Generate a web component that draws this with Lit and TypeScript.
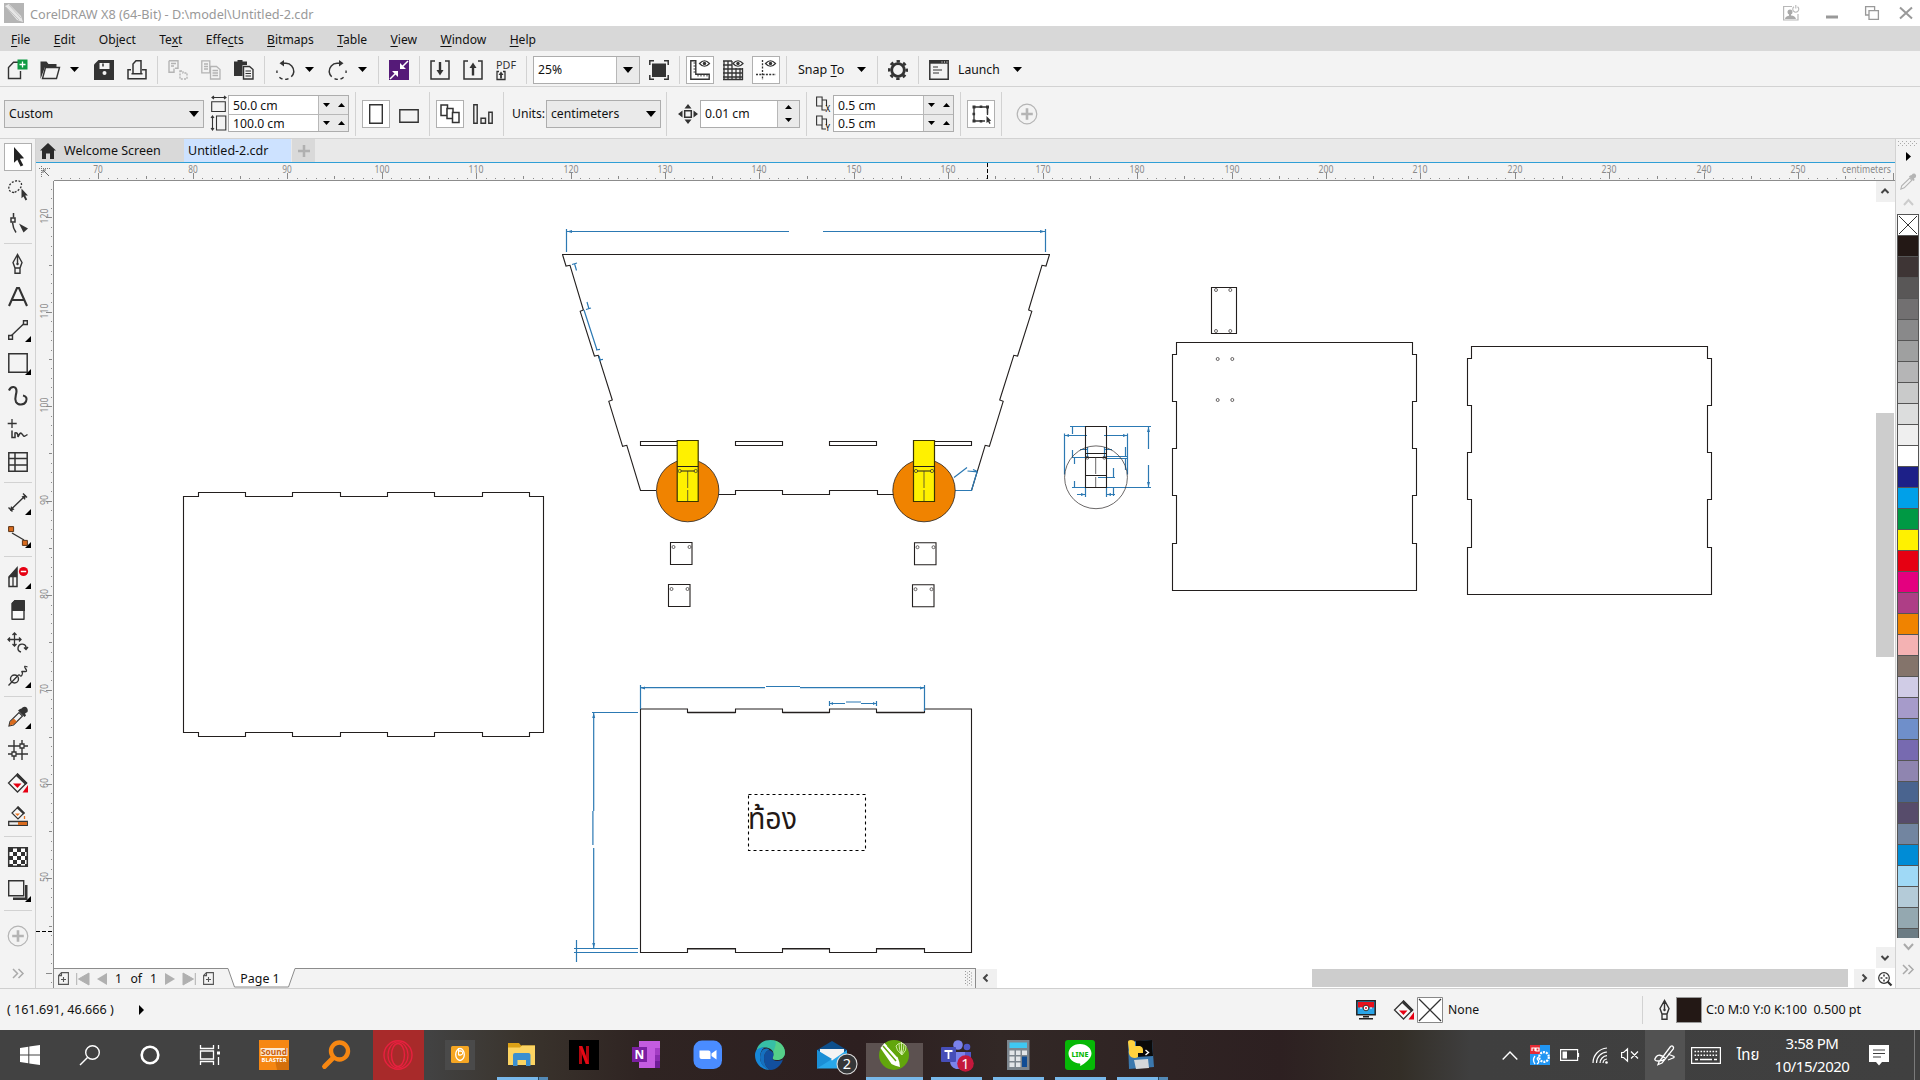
import { LitElement, html, svg, css, nothing, TemplateResult } from "lit";
import { customElement } from "lit/decorators.js";
import { classMap } from "lit/directives/class-map.js";

type Tpl = TemplateResult<1> | TemplateResult<2>;

const D = "#333";
const G = "#b4b4b4";

/* 20x20 line icons used by the toolbars and the toolbox */
const ICONS: Record<string, Tpl> = {
  newDoc: svg`<path d="M12.500 2.200H6.500L1.500 7.500V18.500H13.500V11" fill="none" stroke=${D} stroke-width="1.4"/><rect x="10.500" y="-.5" width="10" height="10" fill="#0f9a42"/><path d="M15.500 1.500v6M12.500 4.500h6" stroke="#fff" stroke-width="1.3"/>`,
  open: svg`<path d="M.5 19V1.500h6l2 2.500h8v3H5z" fill=${D}/><path d="M5.500 7.500h14l-3 11h-14z" fill="#f3f3f3" stroke=${D} stroke-width="1.400"/>`,
  save: svg`<path d="M4.500 0H20v20H0V4.500z" fill=${D}/><path d="M5.500 3h10v6h-10z" fill="#f3f3f3"/><path d="M9 3.500v3" stroke=${D} stroke-width="1.500"/><circle cx="10.500" cy="13" r="2" fill="#f3f3f3"/>`,
  print: svg`<path d="M6 13.500V4l3-3.200h5v12.700M4 9.800H1v9h18v-9h-4M4.500 13.700h11" fill="none" stroke=${D} stroke-width="1.500"/>`,
  cut: svg`<path d="M1 .8h9v7.500H7M1 .8v11.500h5V8.500M3 3.500h5M3 6h3" fill="none" stroke=${G} stroke-width="1.400"/><path d="M12 11h3l0 2h4v6h-7z" fill="none" stroke=${G} stroke-width="1.400" stroke-dasharray="2 1.200"/>`,
  copy: svg`<path d="M.8.8h8v12h-8zM3 4h4M3 6.500h4M3 9h4" fill="none" stroke=${G} stroke-width="1.300"/><path d="M9.500 6.500h6l3.500 3v9.500H9.500zM11.500 10.500h5.500M11.500 13h5.500M11.500 15.500h5.500" fill="#f3f3f3" stroke=${G} stroke-width="1.300"/>`,
  paste: svg`<path d="M0 1.500h3.500V0h5v1.500H13V5H8.500v11H0z" fill=${D}/><path d="M9.500 6.500h6l3.500 3v9.500H9.500z" fill="#f3f3f3" stroke=${D} stroke-width="1.400"/><path d="M11.500 11h5.500M11.500 13.500h5.500M11.500 16h5.500" stroke=${D} stroke-width="1.200"/>`,
  undo: svg`<path d="M6.500 3.300h4.500a8 8 0 0 1 7.800 8.500 8 8 0 0 1-2.500 5" fill="none" stroke=${D} stroke-width="1.500"/><path d="M9 0v6.500L4.500 3.300z" fill=${D}/><path d="M13.500 18.600a8 8 0 0 1-10-2.500M2 13a8 8 0 0 1 0-2.500" fill="none" stroke=${D} stroke-width="1.400" stroke-dasharray="3.500 2.500"/>`,
  redo: svg`<path d="M13.500 3.300H9a8 8 0 0 0-7.800 8.500 8 8 0 0 0 2.500 5" fill="none" stroke=${D} stroke-width="1.500"/><path d="M11 0v6.500l4.500-3.200z" fill=${D}/><path d="M6.500 18.600a8 8 0 0 0 10-2.500M18 13a8 8 0 0 0 0-2.500" fill="none" stroke=${D} stroke-width="1.400" stroke-dasharray="3.500 2.500"/>`,
  content: svg`<path d="M0 0h20v20H0z" fill="#551a78"/><path d="M19 1l-6 6M1 19l6-6" stroke="#fff" stroke-width="1.500"/><path d="M11 3v6h6zM9 17v-6H3z" fill="#fff"/>`,
  importI: svg`<path d="M5 1H1v18h18V1h-4" fill="none" stroke=${D} stroke-width="1.500"/><path d="M10 2v9" stroke=${D} stroke-width="2.400"/><path d="M6.500 10h7L10 15.500z" fill=${D}/>`,
  exportI: svg`<path d="M5 1H1v18h18V1h-4" fill="none" stroke=${D} stroke-width="1.500"/><path d="M10 15.500V7" stroke=${D} stroke-width="2.400"/><path d="M6.500 8h7L10 2.500z" fill=${D}/>`,
  pdf: svg`<text x="0" y="8.800" font-size="10.500" textLength="20" lengthAdjust="spacingAndGlyphs" fill=${D} font-family="Noto Sans, sans-serif">PDF</text><path d="M3 11.500H1v8h8v-8H7" fill="none" stroke=${D} stroke-width="1.300"/><path d="M5 18.500v-4" stroke=${D} stroke-width="1.800"/><path d="M2.500 15h5L5 11.500z" fill=${D}/>`,
  full: svg`<path d="M3 3.500h14v13.500H3z" fill=${D}/><path d="M.8 5V.8H5M15 .8h4.200V5M19.200 15v4.200H15M5 19.200H.8V15" fill="none" stroke=${D} stroke-width="1.500"/>`,
  rulers: svg`<path d="M.8.8h5v13.400h13.400v5H.8z" fill="none" stroke=${D} stroke-width="1.400"/><path d="M3.500 3h2M3.500 6h2M3.500 9h2M3.500 12h2M8 14.500v2M11 14.500v2M14 14.500v2M17 14.500v2" stroke=${D}/>${eye(14.500, 3.500)}`,
  grid: svg`<path d="M1 1v18M5 1v18M9 1v18M13 8v11M17 8v11M0 1h9M0 5h9M0 9h20M0 13h20M0 17h20M0 19.500h20M19.500 8v12" stroke=${D} stroke-width="1.300"/>${eye(15, 3.500)}`,
  guides: svg`<path d="M6.500 0v20M0 14.500h20" stroke=${D} stroke-width="1.300" stroke-dasharray="2 1.300"/>${eye(14.500, 3.500)}`,
  gear: svg`<circle cx="10" cy="10" r="6.300" fill="none" stroke=${D} stroke-width="2.800"/><circle cx="10" cy="10" r="8.700" fill="none" stroke=${D} stroke-width="2.600" stroke-dasharray="3.400 3.430" stroke-dashoffset="1.700"/>`,
  launch: svg`<path d="M.8.8h18.400v18.400H.8z" fill="none" stroke=${D} stroke-width="1.500"/><path d="M1 2.200h18" stroke=${D} stroke-width="3"/><path d="M12.500 2h1M15 2h1M17.500 2h1" stroke="#fff"/><path d="M4 7h5M4 10h9M4 13h6" stroke=${D} stroke-width="1.200"/>`,
  portrait: svg`<path d="M3.700.8h12.600v18.400H3.700z" fill="none" stroke=${D} stroke-width="1.400"/>`,
  landscape: svg`<path d="M.8 5.700h18.400v12.600H.8z" fill="none" stroke=${D} stroke-width="1.400"/>`,
  pages: svg`<path d="M1 1h6.500v10.500H1z" fill="#fff" stroke=${D} stroke-width="1.500"/><path d="M7 4.500h6v10H7z" fill="#fff" stroke=${D} stroke-width="1.500"/><path d="M12.500 8.500h6.500v10h-6.500z" fill="#fff" stroke=${D} stroke-width="1.500"/>`,
  pageCur: svg`<path d="M.8.8h3.400v18.400H.8zM8 14.200h4.500v5H8zM15.800 8.200h3.400v11h-3.400z" fill="none" stroke=${D} stroke-width="1.400"/>`,
  nudge: svg`<path d="M6.700 6.700h6.600v6.600H6.700z" fill="none" stroke=${D} stroke-width="1.500"/><path d="M10 0l3.500 4.500h-7zM10 20l3.500-4.500h-7zM0 10l4.500-3.500v7zM20 10l-4.500-3.500v7z" fill=${D}/>`,
  treat: svg`<path d="M3 3h13.500v14H3z" fill="none" stroke=${D} stroke-width="1.300"/><path d="M1.500 1.500h3v3h-3zM8.700 1.500h2.600v2.600H8.700zM15 1.500h3v3h-3zM1.500 8.700h2.600v2.600H1.500zM1.500 15.500h3v3h-3zM8.700 16h2.600v2.500H8.700z" fill=${D}/><path d="M14 9.500h7v11h-7z" fill="#fff"/><path d="M16.500 4v7" stroke=${D} stroke-width="1.300"/><path d="M15.500 12v7l1.600-1.300 1.300 2.300 1.200-.7-1.200-2.200 1.800-.3z" fill=${D}/>`,
  plusC: svg`<circle cx="10" cy="10" r="9.800" fill="none" stroke=${G} stroke-width="1.200"/><path d="M10 4.200v11.600M4.200 10h11.600" stroke=${G} stroke-width="2.600"/>`,
  pick: svg`<path d="M6 0v15.800l3.300-3 3.300 6.800 2.700-1.400-3.400-6.500 4.200-.4z" fill="#222"/>`,
  freePick: svg`<path d="M6 12.500C1 12.500-.5 8 2 4.500S10-.5 12.500 2s.5 8-6.500 10.500z" fill="none" stroke=${D} stroke-width="1.300" stroke-dasharray="2 1.500"/><path d="M13.500 8.500v9.700l2-1.800 2 4 1.700-.9-2-3.900 2.700-.2z" fill=${D}/>`,
  shape: svg`<path d="M5.500 0v4.500M4.500 9.500q.5 6 3.500 10" fill="none" stroke=${D} stroke-width="1.500"/><path d="M3 5h4v4H3z" fill="none" stroke=${D} stroke-width="1.500"/><path d="M11 10.500l9 5-4.500 4z" fill=${D}/>`,
  pen: svg`<path d="M9.500.5L5 8.500l2 5.500h5l2-5.500zM9.500 2v8M7 14v5.200h5V14" fill="none" stroke=${D} stroke-width="1.400"/><circle cx="9.500" cy="10" r="1.200" fill=${D}/>`,
  text: svg`<path d="M1 19L9 1h2l8 18M4 13h12" fill="none" stroke=${D} stroke-width="2.100"/>`,
  line: svg`<path d="M3.500 15.500L15.500 4" stroke=${D} stroke-width="1.400"/><path d="M.7 15.500h3.800v3.800H.7zM15.500 .7h3.800v3.800h-3.800z" fill="#f3f3f3" stroke=${D} stroke-width="1.400"/>`,
  rect: svg`<path d="M.8.8h18.400v18.400H.8z" fill="none" stroke=${D} stroke-width="1.500"/>`,
  spiral: svg`<path d="M1 4.500C3-.5 8.500 0 8.500 5c0 4-2.500 7-.5 11 2 3.500 8 3.500 10-.5 1.500-3 0-5.500-3-6" fill="none" stroke=${D} stroke-width="2.100"/>`,
  artistic: svg`<path d="M4 0v9M-.3 4.500h9" stroke=${D} stroke-width="1.300"/><path d="M4 11.500v7h3V14q3-1 3 4 2-5 3.500-3.500t2 2.500 4-1.500" fill="none" stroke=${D} stroke-width="1.500"/>`,
  table: svg`<path d="M.8.800h18.400v18.400H.8zM.8 6.500h18.400M.8 13h18.400M7 .8v18.400" fill="none" stroke=${D} stroke-width="1.500"/>`,
  dim: svg`<path d="M2.500 17L17 3M.5 14.500l4 4M15 .5l4 4" stroke=${D} stroke-width="1.400"/><path d="M2 18l1-5 3.500 3.500zM18 2l-1 5-3.500-3.500z" fill=${D}/>`,
  conn: svg`<path d="M4 7l12 7" stroke=${D} stroke-width="1.400"/><path d="M.6.6h5v5h-5zM14.400 14.400h5v5h-5z" fill="#d96b1e" stroke="#5a3418"/>`,
  knife: svg`<path d="M1 19.500V10l8-9v18.500z" fill="#f3f3f3" stroke=${D} stroke-width="1.500"/><path d="M1.500 10l7-7.500V9.500h-7zM5 9v10" fill=${D} stroke=${D} stroke-width="1.300"/><circle cx="15.500" cy="4.500" r="4.600" fill="#e60012"/><path d="M12.800 4.500h5.400" stroke="#fff" stroke-width="1.500"/>`,
  eraser: svg`<path d="M7 .7h9v18.600H4V3.500z" fill="#f8f8f8" stroke=${D} stroke-width="1.400" stroke-linejoin="round"/><path d="M6.500 0H16q1 0 1 1v10H4V3z" fill=${D}/>`,
  transform: svg`<path d="M6.500 0v13M0 6.500h13M4.500 2l2-2 2 2M4.500 11l2 2 2-2M2 4.500l-2 2 2 2M11 4.500l2 2-2 2" fill="none" stroke=${D} stroke-width="1.300"/><path d="M13 19a4 4 0 1 1 5-3.500M20 14l-2 2.500-2-2" fill="none" stroke=${D} stroke-width="1.400"/>`,
  distort: svg`<circle cx="6.500" cy="13" r="4" fill="none" stroke=${D} stroke-width="1.400"/><path d="M.5 19.500l9-9.500q1.500-2 2.500-.5t2-.5 0-3 2.500-.5 1-3 2-1.500" fill="none" stroke=${D} stroke-width="1.300"/>`,
  dropper: svg`<path d="M1 19l1-4.500L11 5.500l3.500 3.500-9 9z" fill="#f3f3f3" stroke=${D} stroke-width="1.200"/><path d="M1.500 18.500l.8-4 3.500-3 3 3-3.500 3z" fill="#d96b1e"/><path d="M10 3.500l6.500 6.500 1.500-1.500-1-2 2.500-1.500q1-3-1.500-5-3-.8-4.500 1.500L12 2z" fill=${D}/>`,
  dropperG: svg`<path d="M1 19l1-4L11.500 6l2.500 2.500-9 9z" fill="#f3f3f3" stroke="#b4b4b4" stroke-width="1.300"/><path d="M10.500 4l5.500 5.500 1.200-1.200-.8-1.800 2.300-1.500q1-2.500-1-4.200-2.500-.8-4 1.500L12 3z" fill="#b4b4b4"/>`,
  mesh: svg`<path d="M6 0v20M14 0v20M0 6h20M0 14h20" stroke=${D} stroke-width="1.400"/><path d="M12 4h4v4h-4zM4 12h4v4H4z" fill="#f3f3f3" stroke=${D} stroke-width="1.300"/>`,
  fill: svg`<path d="M9.500 1l9 9-9 9-9-9z" fill="#f8f8f8" stroke=${D} stroke-width="1.300"/><path d="M9.500 0l10 10-2 2L8 3z" fill=${D}/><path d="M5 10.500h8.500L9.500 15z" fill="#e60012"/><path d="M20 12v7.500h-5.500z" fill="#e60012"/>`,
  smart: svg`<path d="M10 1l6 6-6 6-6-6z" fill="#f8f8f8" stroke=${D} stroke-width="1.200"/><path d="M10 0l7 7-1.500 1.500L8.500 2z" fill=${D}/><path d="M7 7.500h5L9.500 10z" fill="#e87522"/><path d="M16.500 10v3" stroke="#e87522" stroke-width="1.300"/><path d="M.7 15.500h18.600v3.800H.7z" fill="#eee" stroke=${D} stroke-width="1.300"/><path d="M10 16h9v3h-9z" fill="#d96b1e"/>`,
  checker: svg`<path d="M.7.7h18.600v18.600H.7z" fill="#fff" stroke=${D} stroke-width="1.500"/><path d="M1 1h4v4H1zM9 1h4v4H9zM5 5h4v4H5zM13 5h4v4h-4zM1 9h4v4H1zM9 9h4v4H9zM5 13h4v4H5zM13 13h4v4h-4zM1 17h4v2H1zM9 17h4v2H9zM17 1h2v4h-2zM17 9h2v4h-2zM17 17h2v2h-2z" fill=${D}/>`,
  shadow: svg`<path d="M.7.700h15v15H.7z" fill="none" stroke=${D} stroke-width="1.400"/><path d="M17 5h2.500v15H5v-2.500h12z" fill=${D}/>`,
};

function eye(x: number, y: number) {
  return svg`<path d="M${x - 5} ${y}q5-5.500 10 0q-5 5.500-10 0z" fill="#fff" stroke=${D} stroke-width="1.200"/><circle cx=${x} cy=${y} r="1.700" fill=${D}/>`;
}

const icon = (n: string, s = 20) =>
  html`<svg class="ic" width=${s} height=${s} viewBox="0 0 20 20">${ICONS[n]}</svg>`;

const tri = (dir: "d" | "u" | "r", w = 10, h = 6, fill = "#000") => {
  const p = dir === "d" ? `M0 0H${w}L${w / 2} ${h}z` : dir === "u" ? `M0 ${h}H${w}L${w / 2} 0z` : `M0 0L${w} ${h / 2}L0 ${h}z`;
  return html`<svg class="ic" width=${w} height=${h}><path d=${p} fill=${fill}/></svg>`;
};

const PALETTE = ["none", "#231815", "#3e3535", "#595757", "#727071", "#89898a", "#9fa0a0", "#b5b5b6", "#c9caca", "#dcdddd", "#efefef", "#ffffff", "#1d2088", "#00a0e9", "#009944", "#fff100", "#e60012", "#e4007f", "#ae3e86", "#f08300", "#f4b2b3", "#84746b", "#d0cce6", "#a69bca", "#6f8fca", "#776ab0", "#8f85b0", "#4a648f", "#574c6b", "#7285a0", "#008cd6", "#9fd9f6", "#b4cbd8", "#94a8b0", "#6c7c84"];

const MENUS = ["_File", "_Edit", "Ob_ject", "Te_xt", "Effe_cts", "_Bitmaps", "_Table", "_View", "_Window", "_Help"];

const accel = (s: string) => {
  const i = s.indexOf("_");
  return html`${s.slice(0, i)}<u>${s[i + 1]}</u>${s.slice(i + 2)}`;
};

const base = css`
  * { box-sizing: border-box; }
  .ic { display: block; overflow: visible; flex: none; }
  u { text-decoration-thickness: 1px; text-underline-offset: 2px; }
`;

/* ---------- rulers ---------- */
const STEP = 94.44;
@customElement("h-ruler")
class HRuler extends LitElement {
  static styles = css`:host{display:block;height:18px;flex:1;background:#f3f3f3;border-bottom:1px solid #8c8c8c}svg{display:block;overflow:visible}text{font:10px "Noto Sans",sans-serif;fill:#8a8a8a}`;
  render() {
    const ticks: Tpl[] = [];
    for (let v = 66; v <= 260; v++) {
      const x = Math.round(98.3 + ((v - 70) * STEP) / 10 - 54);
      if (x < 2 || x > 1839) continue;
      const h = v % 10 === 0 ? 6 : v % 5 === 0 ? 3 : 1;
      ticks.push(svg`<rect x=${x} y=${16 - h} width="1" height=${h} fill="#8a8a8a"/>`);
      if (v % 10 === 0 && v < 260) ticks.push(svg`<text x=${x} y="10" text-anchor="middle" textLength=${v < 100 ? 9.500 : 15} lengthAdjust="spacingAndGlyphs">${v}</text>`);
    }
    return html`<svg width="1841" height="17">${ticks}<text x="1788" y="10" textLength="49" lengthAdjust="spacingAndGlyphs">centimeters</text><path d="M933.500 0v17" stroke="#000" stroke-dasharray="4 2"/><path d="M1839.500 11v6" stroke="#8a8a8a"/></svg>`;
  }
}

@customElement("v-ruler")
class VRuler extends LitElement {
  static styles = css`:host{display:block;width:18px;background:#f3f3f3;border-right:1px solid #8c8c8c}svg{display:block}text{font:10px "Noto Sans",sans-serif;fill:#8a8a8a}`;
  render() {
    const t: Tpl[] = [];
    for (let v = 39; v <= 123; v++) {
      const y = Math.round(217.3 + ((120 - v) * STEP) / 10 - 181);
      if (y < 2 || y > 805) continue;
      const w = v % 10 === 0 ? 6 : v % 5 === 0 ? 3 : 1;
      t.push(svg`<rect x=${16 - w} y=${y} width=${w} height="1" fill="#8a8a8a"/>`);
      if (v % 10 === 0 && v > 40) t.push(svg`<text transform="translate(11.500 ${y - 1}) rotate(-90)" text-anchor="middle" textLength=${v < 100 ? 10 : 15} lengthAdjust="spacingAndGlyphs">${v}</text>`);
    }
    return html`<svg width="17" height="807">${t}<path d="M0 750.500h17" stroke="#000" stroke-dasharray="4 2"/></svg>`;
  }
}

/* ---------- drawing ---------- */
@customElement("drawing-canvas")
class DrawingCanvas extends LitElement {
  static styles = css`
    :host { display: block; flex: 1; background: #fff; overflow: hidden; }
    svg { display: block; }
    .k { fill: none; stroke: #231f1e; stroke-width: 1.1; }
    .thin { fill: none; stroke: #3a3635; stroke-width: .75; }
    .b { fill: none; stroke: #2c79b3; stroke-width: 1.2; }
    .bold { stroke-width: 1.5; }
    .ba { fill: #2c79b3; }
    .thai { font: 31px "Noto Sans Thai", "Noto Sans", "Liberation Sans", sans-serif; fill: #231815; }
  `;
  private panel(dx: number, dy: number) {
    return svg`<path class="k" transform="translate(${dx} ${dy})" d="M1176.500 342.500H1412.500V354.500H1416.500V401.500H1412.500V448.500H1416.500V495.500H1412.500V543.500H1416.500V590.500H1172.500V543.500H1176.500V495.500H1172.500V448.500H1176.500V401.500H1172.500V354.500H1176.500z"/>`;
  }
  private wheel(cx: number) {
    return svg`<circle cx=${cx} cy="490.600" r="31.200" fill="#f08300" stroke="#231f1e" stroke-width=".8"/>
      <path d="M${cx - 10.500} 440.500h21v61h-21z" fill="#fff100" stroke="#3b3400" stroke-width="1.200"/>
      <path class="k" d="M${cx - 10.500} 466.500h21M${cx - 7} 471h14"/><path class="thin" d="M${cx} 471v17M${cx} 490v11"/>
      <circle class="thin" cx=${cx - 8} cy="471" r="1.600"/><circle class="thin" cx=${cx + 8} cy="471" r="1.600"/>`;
  }
  private block(x: number, y: number) {
    return svg`<path class="k" d="M${x} ${y}h21.500v22h-21.500z"/><circle class="thin" cx=${x + 3} cy=${y + 4.500} r="1.500"/><circle class="thin" cx=${x + 19} cy=${y + 4.500} r="1.500"/>`;
  }
  private dots(pts: number[][]) {
    return pts.map(([x, y]) => svg`<circle class="thin" cx=${x} cy=${y} r="1.500"/>`);
  }
  render() {
    const side = [[562.5, 254.5], [566, 266], [570, 265.3], [583.4, 310], [580.2, 311.3], [594.4, 356], [598.2, 355.3], [612.3, 400], [608.8, 401.3], [622.6, 446.3], [626.8, 445.3], [640.5, 490.5]];
    const L = side.map((p) => p.join(" ")).join("L");
    const R = side.map(([x, y]) => `${1612 - x} ${y}`).reverse().join("L");
    return html`<svg width="1822" height="787" viewBox="54 181 1822 787">
      <path class="k" d="M${L}H656M719 494.500H735.500V490.500H782.500V494.500H829.500V490.500H877.500V494.500H894"/>
      <path class="k" d="M${R}M562 254.500H1050"/>
      <path class="b" d="M955 490.500H971.500L977 472"/>
      <path class="k" d="M640.500 441.500h47v4h-47zM735.500 441.500h47v4h-47zM829.500 441.500h47v4h-47zM924.500 441.500h47v4h-47z"/>
      ${this.wheel(687.7)}${this.wheel(924)}
      ${this.block(670.5, 542.5)}${this.block(668.5, 584.5)}${this.block(914.5, 542.7)}${this.block(912.5, 584.7)}
      <path class="b" d="M566.500 229V252M1045.500 229V252M566 231.500H789M823 231.500H1046"/>
      <path class="ba" d="M567 231.500l5-1.500v3zM1045 231.500l-5-1.500v3z"/>
      <path class="b" d="M572 264.500l5-1.500M574.500 263.500l2 7M587 302l2 7M586 309.500l5-1.500M584 310l13 40M596 350l4-.7M599 356l1.500 5M599 360l4-.700"/>
      <path class="b" d="M954 477.500l13-10M967.500 471l10 .8M973 469.500l4.500 2"/>
      ${this.panel(0, 0)}${this.panel(295, 4)}
      <path class="k" d="M1211.500 287.500H1236.500V333.500H1211.500z"/>
      ${this.dots([[1216, 290], [1230.3, 290], [1216, 331], [1230.3, 331], [1217.7, 359], [1232.3, 359], [1217.7, 400], [1232.3, 400]])}
      <path class="b" d="M1070 426.500h15M1109 426.500h42M1148.500 427v22M1148.500 465v22M1106 487.500h45M1064.500 433.500v41M1064 435.500h23M1104 435.500h23M1127.500 433.500v41M1072.500 427v7M1072.500 450v7M1072 457.500h13M1074.500 458v6M1074.500 481v6M1072 487.500h13M1087.500 447v10M1104.500 447v10M1080 449.500h7M1104 449.500h8M1085.500 487v10M1106.500 487v10M1077 494.500h9M1106 494.500h9M1113.500 468v10M1098 477.500h17M1113.500 487v9M1106 456.500h22M1106 458.500h22M1125.500 447v9M1125.500 459v11"/>
      <path class="ba" d="M1148.500 427l-1.500 5h3zM1148.500 487l-1.500-5h3zM1065 435.500l4-1.500v3zM1127 435.500l-4-1.500v3zM1085 494.500l-4-1.500v3zM1107 494.500l4-1.500v3z"/>
      <circle class="thin" cx="1096" cy="477.300" r="31.400"/>
      <path class="k" d="M1085.500 426.500H1106.500V487.500H1085.500zM1085.500 453.500h21M1085.500 457.500h21M1085.500 475.500h21"/><path class="thin" d="M1095.700 457V474M1095.700 477v10"/>
      ${this.dots([[1087.3, 457.7], [1104.3, 457.7]])}
      <path class="k" d="M183.500 496.500H198.500V492.500H245.500V496.500H292.500V492.500H340.500V496.500H387.500V492.500H434.500V496.500H482.500V492.500H529.500V496.500H543.500V732.500H529.500V736.500H482.500V732.500H434.500V736.500H387.500V732.500H340.500V736.500H292.500V732.500H245.500V736.500H198.500V732.500H183.500z"/>
      <path class="k" d="M245 496.500h48M340 496.500h48M434 496.500h48M245 732.500h48M340 732.500h48M434 732.500h48"/>
      <path class="k" d="M640.500 709H687.500V712.500H735.500V709H782.500V712.500H829.500V709H876.500V712.500H924.500V709H971.500V952.500H924.500V948.500H876.500V952.500H829.500V948.500H782.500V952.500H735.500V948.500H687.500V952.500H640.500z"/>
      <path class="k bold" d="M687.500 712.500h48M782.500 712.500h47M876.500 712.500h48M687.500 948.700h48M782.500 948.700h47M876.500 948.700h48"/>
      <path class="b" d="M640.500 685V709M924.500 685V711M641 687.700H765M766 686.500H800M800 687.700H924M829.500 701V706M876.500 701V706M830 703.500H845M846 702H861M861 703.500H876M592 712.500H638M593.700 713V811M592.900 811V845M593.700 848V949M574 948.500H638M574 952.500H638M576.500 940V962"/>
      <path class="ba" d="M641 688l4-1.500v3zM924 688l-4-1.500v3zM593.700 713l-1.500 5h3zM593.700 948l-1.500-5h3zM830 703.500l3-1.500v3zM876 703.500l-3-1.500v3z"/>
      <path d="M748.500 794.500H865.500V850.500H748.500z" fill="none" stroke="#000" stroke-width="1.100" stroke-dasharray="3 3"/>
      <text class="thai" x="748" y="828.500" textLength="49" lengthAdjust="spacingAndGlyphs">ท้อง</text>
    </svg>`;
  }
}

/* ---------- taskbar ---------- */
const TASKS: { id: string; run?: boolean; stack?: boolean; art: Tpl }[] = [
  { id: "sound", art: svg`<path d="M0 0h30v30H0z" fill="#f68712"/><path d="M1.500 8h27v8h-27z" fill="#fbe8d2"/><path d="M16 20l10-4 4 5v9H18z" fill="#d5700b"/><text x="15" y="15" font-family="Noto Sans" font-weight="700" font-size="8.500" fill="#c9600a" text-anchor="middle" textLength="26" lengthAdjust="spacingAndGlyphs">Sound</text><text x="15" y="21.500" font-family="Noto Sans" font-weight="700" font-size="5" fill="#fff" text-anchor="middle" textLength="25" lengthAdjust="spacingAndGlyphs">BLASTER</text>` },
  { id: "find", art: svg`<circle cx="18.500" cy="11" r="8.500" fill="none" stroke="#f68712" stroke-width="4.400"/><path d="M12 18l-8.500 8.500" stroke="#f68712" stroke-width="4.800" stroke-linecap="round"/>` },
  { id: "opera", art: svg`<ellipse cx="15" cy="15" rx="14" ry="14.300" fill="none" stroke="#e8203f" stroke-width="1.400"/><ellipse cx="15" cy="15" rx="10" ry="13" fill="none" stroke="#e8203f" stroke-width="1.200"/><ellipse cx="15" cy="15" rx="6.500" ry="11.500" fill="none" stroke="#e8203f" stroke-width="1.400"/>` },
  { id: "app", art: svg`<path d="M0 0h30v30H0z" fill="#4a4a4a"/><rect x="6" y="6" width="18" height="17" rx="1.500" fill="#f5a623"/><ellipse cx="15" cy="14.500" rx="4.300" ry="6" fill="none" stroke="#fff" stroke-width="1.300"/><path d="M13.500 11h2.300q2 .2 2 2t-2 2h-2.300zh2.500q1.700.5 1.700 2t-2 2h-2.200v-7" fill="none" stroke="#fff"/>` },
  { id: "folder", run: true, stack: true, art: svg`<path d="M1 3h11l2 2.500h14v4H1z" fill="#dba117"/><path d="M1 7.500h12l2-2H28V25H1z" fill="#fcd462"/><path d="M6 26V15q0-2 2-2h13.500q2 0 2 2v11H19v-6h-8.500v6z" fill="#3b8fd0"/>` },
  { id: "netflix", art: svg`<path d="M0 0h30v30H0z" fill="#000"/><path d="M10 6h3v18h-3zM17 6h3v18h-3z" fill="#b1060f"/><path d="M10 6h3.300l6.700 18h-3.300z" fill="#e50914"/>` },
  { id: "onenote", art: svg`<path d="M8 1h21v27H8z" fill="#c45ce0"/><path d="M24 8h5v7h-5z" fill="#a33cc4"/><path d="M24 15h5v6h-5z" fill="#8a2bb0"/><path d="M24 21h5v7h-5z" fill="#6f1d98"/><path d="M1 7h15v15H1z" fill="#7b1fa2"/><text x="8.500" y="19" font-family="Noto Sans" font-weight="700" font-size="12" fill="#fff" text-anchor="middle">N</text>` },
  { id: "zoom", art: svg`<rect x=".5" y=".5" width="28.500" height="28.500" rx="8.500" fill="#4a8cff"/><path d="M6.500 10.500h9q2 0 2 2v6.500h-9q-2 0-2-2zM18.500 13.500l5-3.500v9.500l-5-3.500z" fill="#fff"/>` },
  { id: "edge", art: svg`<path d="M1 13C2 4 8 0 15.500 0 24 0 30 6 30 12.500c0 5-4 7.500-8 7.500-3 0-4.500-1-4.500-2s1-1.500 1-4c0-4-4-6.500-8.500-6.500S2 10 1 13z" fill="#37bfa6"/><path d="M15.500 0C24 0 30 6 30 12.500c0 5-4 7.500-8 7.500-3 0-4.500-1-4.500-2s1-1.500 1-4c0-5 3-8 2-13z" fill="#62d67c" opacity=".7"/><path d="M0 15C0 9 5 7 9.500 7.500c-3 2-4.500 6-4.500 10C5 23 9 28 15 30 7 30 0 24 0 15z" fill="#1787d8"/><path d="M9 18c0-4 2-7 5-8 2.500.8 4.500 2.500 4.500 4.500 0 2.500-1 3-1 4 0 1.300 2 2.500 5 2.500 2.200 0 4.500-.8 5.500-1.700C26 26 21 30 15.500 30 11 28 9 23 9 18z" fill="#124f9e"/><path d="M5 17.500C5 12 8 8 12 8.500c1.500.3 2 .8 2 1.500-3 1-5 4-5 8 0 5 2 10 6.500 12C9 29 5 23 5 17.500z" fill="#1570c0"/>` },
  { id: "mail", art: svg`<path d="M0 10L15 1l15 9v18H0z" fill="#0d4f8c"/><path d="M3 9h24v12H3z" fill="#f4f4f4"/><path d="M0 10l15 10.500L30 10v18.500H0z" fill="#29a8ea"/><path d="M0 10v18.500L15 19z" fill="#1b8fd6"/><circle cx="30" cy="24" r="10" fill="#353638" stroke="#ddd" stroke-width="1.100"/><text x="30" y="29.200" font-family="Noto Sans" font-size="14.500" fill="#fff" text-anchor="middle">2</text>` },
  { id: "corel", run: true, art: svg`<circle cx="15" cy="15" r="15" fill="#62a60c"/><path d="M1.500 8l4-5 13 14q2 4 2.500 10-5-1-8.500-3z" fill="#fff"/><path d="M4 6l13 15M8.500 5.500l10 11" stroke="#62a60c" stroke-width="1.500"/><path d="M17 6q4.500-6 10 0 1 4-4 9-6-5-6-9zM22.500 2v13M20 4q0 6 2.500 11M25 4q0 6-2.500 11" fill="none" stroke="#d9efb2" stroke-width=".9"/>` },
  { id: "teams", run: true, art: svg`<circle cx="17" cy="5" r="4.800" fill="#7b83eb"/><circle cx="26" cy="7" r="3.300" fill="#5059c9"/><path d="M20 12h10v10q-4 4-8 2z" fill="#5059c9"/><path d="M9 12h15v10q-3 8-9 7-6-2-6-8z" fill="#7b83eb"/><rect x="0" y="7" width="15" height="15" rx="1" fill="#464eb8"/><path d="M3.500 11h8M7.500 11v8" stroke="#fff" stroke-width="1.800"/><circle cx="24.500" cy="23.500" r="8.300" fill="#c4183c"/><text x="24.500" y="29" font-family="Noto Sans" font-size="14.500" fill="#fff" text-anchor="middle">1</text>` },
  { id: "calc", run: true, art: svg`<path d="M4 0h22.500v30H4z" fill="#7c858d"/><path d="M6.500 2.500H24V8H6.500z" fill="#3fc8f2"/><path d="M6.500 10.500h5v4.500h-5zM13 10.500h4.500v4.500H13zM19 10.500h5v4.500h-5zM6.500 16.500h5V21h-5zM13 16.500h4.500V21H13zM6.500 22.500h5V27h-5zM13 22.500h4.500V27H13z" fill="#e2e5e8"/><path d="M19 16.500h5V27h-5z" fill="#0f4c94"/>` },
  { id: "line", run: true, art: svg`<rect width="30" height="30" rx="3" fill="#06b806"/><path d="M15 4c7 0 11.500 4.500 11.500 9.500C26.500 19 19 24 15.500 26c-.8-.5.300-2-.5-2.500C8 23 3.500 18.500 3.500 13.500S8 4 15 4z" fill="#fff"/><text x="15" y="16.800" font-family="Noto Sans" font-weight="800" font-size="7.500" fill="#06b806" text-anchor="middle" textLength="17" lengthAdjust="spacingAndGlyphs">LINE</text>` },
  { id: "shell", run: true, stack: true, art: svg`<path d="M1 2l24-2 2 27-25 2z" fill="#3b78ad"/><path d="M9 1l16-1 1 16-17 1z" fill="#0a0a0a"/><path d="M7 20l14-1 1 9-13 1z" fill="#d5d8da"/><path d="M1 2q0-2 3-2t4 2v4h5q3 1 3 4v3h-5v4q-3 2-7 0-3-3-2-7z" fill="#ffd23e"/><path d="M18.500 10l3 2.500-3 2.500" fill="none" stroke="#fff" stroke-width="1.400"/>` },
];

@customElement("win-taskbar")
class WinTaskbar extends LitElement {
  static styles = [base, css`
    :host { display: flex; height: 50px; color: #fff; align-items: stretch;
      background: linear-gradient(90deg, #424242 0, #424242 430px, #3a342d 520px, #2f2422 640px, #2d1f20 860px, #322826 1000px, #2d2021 1280px, #332e27 1400px, #3f3f3f 1470px, #404040 100%);
      font: 15px "Noto Sans", sans-serif; }
    .start { display: flex; width: 243px; }
    .sys { width: 60px; display: flex; align-items: center; justify-content: center; }
    .task { width: 62px; display: flex; justify-content: center; align-items: center; }
    .task.opera .cell { background: linear-gradient(#a82a2a 0 47px, #f00 47px); }
    .cell { width: 51px; height: 50px; display: flex; justify-content: center; align-items: center; border-bottom: 3px solid transparent; padding-top: 3px; }
    .run .cell { border-bottom-color: #78b8ea; }
    .stack .cell { border-image: linear-gradient(90deg, #78b8ea 0 40px, #27475f 40px 41px, #5389b5 41px) 1; border-width: 0 0 3px 0; border-style: solid; }
    .corel .cell { width: 57px; height: 50px; background: linear-gradient(transparent 13px, #5c5150 13px); }
    .gap { flex: 1; }
    .tray { display: flex; align-items: center; }
    .t { display: flex; justify-content: center; align-items: center; height: 50px; width: 30px; }
    .pen { width: 40px; background: #525252; }
    .kb { width: 41px; }
    .lang { width: 44px; font: 15px "Noto Sans Thai", "Noto Sans", sans-serif; }
    .clock { width: 84px; height: 50px; display: flex; flex-direction: column; align-items: center; justify-content: center; line-height: 23px; font-size: 15px; letter-spacing: -.5px; white-space: nowrap; }
    .note { width: 50px; }
    .desk { width: 6px; height: 50px; border-left: 1px solid #7a7a7a; margin-left: 10px; }
  `];
  render() {
    const w = "#fff";
    return html`
      <div class="start">
      <div class="sys"><svg class="ic" width="20" height="20"><path d="M0 3l8.300-1.200v7.700H0zM9.300 1.600L20 0v9.500H9.300zM0 10.500h8.300v7.700L0 17zM9.300 10.500H20V20l-10.700-1.600z" fill=${w}/></svg></div>
      <div class="sys"><svg class="ic" width="20" height="20"><circle cx="12.500" cy="7.500" r="6.800" fill="none" stroke=${w} stroke-width="1.400"/><path d="M7.500 12.500L0 20" stroke=${w} stroke-width="1.500"/></svg></div>
      <div class="sys"><svg class="ic" width="20" height="20"><circle cx="10" cy="10" r="8.300" fill="none" stroke=${w} stroke-width="2.600"/></svg></div>
      <div class="sys"><svg class="ic" width="20" height="20"><path d="M.5 0v3.500h13V0M.5 20v-3.500h13V20M.5 6h13v8H.5z" fill="none" stroke=${w} stroke-width="1.300"/><path d="M18.500 0v4M18.500 12v8" stroke=${w} stroke-width="1.300"/><path d="M17 6.500h3v3h-3z" fill=${w}/></svg></div>
      </div>
      ${TASKS.map((t) => html`<div class=${classMap({ task: true, [t.id]: true, run: !!t.run, stack: !!t.stack })}><div class="cell"><svg class="ic" width="30" height="30">${t.art}</svg></div></div>`)}
      <div class="gap"></div>
      <div class="tray">
        <div class="t"><svg class="ic" width="16" height="9"><path d="M.7 8.500L8 1l7.300 7.500" fill="none" stroke=${w} stroke-width="1.400"/></svg></div>
        <div class="t"><svg class="ic" width="20" height="20"><path d="M0 0h20v20H0z" fill="#2196f3"/><path d="M0 0h10v9H0z" fill="#e52a35"/><path d="M2 6V3h3v3M6 3h3v3H6zM8 6" fill="none" stroke="#fff" stroke-width="1.200"/><circle cx="14" cy="12" r="4.800" fill="none" stroke="#fff" stroke-width="2.200" stroke-dasharray="2 1"/><path d="M5 11q-3 4 0 8M9 12q-3 1-1 3t-1 4" fill="none" stroke="#fff" stroke-width="1.300"/></svg></div>
        <div class="t"><svg class="ic" width="20" height="12"><path d="M.6.6h17v10.800H.6zM18.500 4v4" fill="none" stroke=${w} stroke-width="1.200"/><path d="M2.500 2.500h4.500v7H2.500z" fill=${w}/></svg></div>
        <div class="t"><svg class="ic" width="17" height="17"><path d="M1 16A15 15 0 0 1 15 1M4.500 16A11 11 0 0 1 15 5M8 16a7.500 7.500 0 0 1 7-7.300M11 16a4.500 4.500 0 0 1 4-4" fill="none" stroke=${w} stroke-width="1.200"/><circle cx="14.500" cy="15.500" r="1.300" fill=${w}/></svg></div>
        <div class="t"><svg class="ic" width="18" height="14"><path d="M.6 4.500h2L6.500.8v12.400L2.600 9.500h-2zM10 3.500l7 7M17 3.500l-7 7" fill="none" stroke=${w} stroke-width="1.200"/></svg></div>
        <div class="t pen"><svg class="ic" width="20" height="20"><path d="M4 17L15.500 1.500q1.500-1.200 2.500 0t.3 2.500L7 18l-4 1.500zM10 13q-6-5-9-1t2 4 6-2M13 9l6 2.500q.5 1-1 1.500l-5 2" fill="none" stroke=${w} stroke-width="1.300"/></svg></div>
        <div class="t kb"><svg class="ic" width="30" height="17"><path d="M.6.6h28.800v15.800H.6z" fill="none" stroke=${w} stroke-width="1.200"/><path d="M3.500 4.500h23M3.500 8.300h23" stroke=${w} stroke-width="1.600" stroke-dasharray="1.600 1.400"/><path d="M4 12.500h3M9 12.500h12M23 12.500h3" stroke=${w} stroke-width="1.500"/></svg></div>
        <div class="t lang">ไทย</div>
        <div class="clock"><span>3:58 PM</span><span>10/15/2020</span></div>
        <div class="t note"><svg class="ic" width="20" height="20"><path d="M0 0h20v17h-7l-3 3.500L7 17H0z" fill=${w}/><path d="M4 5h12M4 8.500h12M4 12h8" stroke="#404040" stroke-width="1.200"/></svg></div>
      </div>
      <div class="desk"></div>`;
  }
}

/* ---------- application shell ---------- */
@customElement("app-root")
class AppRoot extends LitElement {
  static styles = [base, css`
    :host { display: flex; flex-direction: column; width: 1920px; height: 1080px; overflow: hidden; background: #f3f3f3;
      font: 12.200px/16px "Noto Sans", sans-serif; color: #111; white-space: nowrap; }
    .title { height: 26px; background: #fff; display: flex; align-items: center; padding: 0 7px 0 4px; color: #999; }
    .title .name { margin-left: 6px; flex: 1; padding-top: 1px; font-size: 12.700px; }
    .title .wc { display: flex; align-items: center; gap: 27px; }
    .title .x { margin-left: -7px; }
    .menu { height: 25px; background: #d8d8d8; display: flex; align-items: center; gap: 23.400px; padding-left: 11px; padding-top: 3px; font-size: 12.100px; }
    .bar { display: flex; align-items: center; border-bottom: 1px solid #d2d2d2; background: #f3f3f3; }
    .std { height: 36px; padding-top: 2px; }
    .prop { height: 52px; padding-left: 4px; padding-top: 2px; }
    .c { width: 33px; height: 28px; display: flex; align-items: center; justify-content: center; flex: none; }
    .dd { width: 20px; display: flex; justify-content: center; flex: none; padding-right: 4px; }
    .dd.first { width: 21px; padding-right: 5px; }
    .dd.plain { padding-right: 0; }
    .sep { width: 8px; flex: none; display: flex; justify-content: center; }
    .sep::before { content: ""; width: 1px; height: 28px; background: #d2d2d2; }
    .prop .sep::before { height: 44px; }
    .on { width: 28px; height: 28px; border: 1px solid #b0b0b0; background: #fff; display: flex; align-items: center; justify-content: center; flex: none; }
    .box { display: flex; border: 1px solid #adadad; height: 28px; align-items: center; background: #fff; flex: none; }
    .box.grey { background: #eaeaea; }
    .box .v { flex: 1; padding-left: 4px; padding-top: 1px; }
    .box .a { align-self: stretch; background: #eaeaea; border-left: 1px solid #b8b8b8; width: 23px; display: flex; align-items: center; justify-content: center; }
    .box.grey .a { border: 0; width: 19px; background: none; }
    .zoom { width: 107px; margin-left: 3px; margin-right: 2px; }
    .snap { margin-left: 8px; width: 53px; font-size: 12.500px; }
    .launch { width: 52px; padding-left: 3px; }
    .wide { width: 200px; }
    .pair { display: flex; flex-direction: column; gap: 2px; margin-right: 1px; }
    .pair svg { display: block; overflow: visible; }
    .size { margin-left: 7px; }
    .dual { width: 121px; height: 37px; border: 1px solid #adadad; display: grid; grid-template-columns: 88.500px 30.500px; grid-template-rows: 18px 17px; background: #fff; flex: none; }
    .dual .v { padding-left: 4px; line-height: 19px; }
    .dual .v:nth-child(3), .dual .s:nth-child(4) { border-top: 1px solid #b8b8b8; }
    .dual .v:nth-child(3) { line-height: 17px; }
    .dual .s { background: #eaeaea; border-left: 1px solid #b8b8b8; display: flex; align-items: center; gap: 8px; padding-left: 4px; }
    .units { width: 39px; padding-left: 5px; }
    .nud { width: 100px; margin-left: -4px; }
    .nud .a { width: 22px; flex-direction: column; gap: 9px; }
    .ppair { margin-left: 6px; }
    .sp1 { width: 1px; } .sp2 { width: 2px; } .sp3 { width: 3px; } .sp5 { width: 5px; } .sp17 { width: 17px; }
    .work { height: 850px; display: flex; border-bottom: 1px solid #cfcfcf; }
    .tools { width: 36px; border-right: 1px solid #d2d2d2; padding-top: 1.500px; display: flex; flex-direction: column; align-items: center; flex: none; }
    .tool { width: 36px; height: 33px; display: flex; align-items: center; justify-content: center; flex: none; }
    .tool .wrap { display: grid; }
    .tool .wrap > * { grid-area: 1 / 1; }
    .fly { align-self: end; justify-self: end; margin: 0 -3px -2px 0; }
    .hs { height: 8px; display: flex; align-items: center; flex: none; }
    .hs::before { content: ""; width: 28px; height: 1px; background: #d2d2d2; }
    .tool.plus { height: 43px; }
    .tool.more { height: 31px; }
    .doc { flex: 1; display: flex; flex-direction: column; min-width: 0; }
    .tabs { height: 24px; background: #e9e9e9; border-bottom: 1.500px solid #2f9fd6; display: flex; font-size: 12.500px; }
    .tab { height: 22.500px; display: flex; align-items: center; background: #d9d9d9; padding-top: 2px; }
    .tab.home { width: 148px; padding-left: 4px; gap: 8px; }
    .tab.cur { width: 107px; background: #cde2ff; padding-left: 4px; }
    .tab.new { width: 23px; margin-left: 1px; justify-content: center; }
    .hrow { display: flex; height: 18px; }
    .corner { width: 18px; display: flex; align-items: center; justify-content: center; background: #f3f3f3; }
    .main { flex: 1; display: flex; min-height: 0; }
    .stage { flex: 1; display: flex; flex-direction: column; min-width: 0; }
    .upper { display: flex; height: 787px; }
    .vs { width: 19px; background: #fff; display: flex; flex-direction: column; }
    .sb { background: #f0f0f0; display: flex; align-items: center; justify-content: center; flex: none; }
    .vs .sb { height: 21px; width: 19px; padding: 1px 2px 0 0; }
    .vs .thumb { margin-top: 211px; width: 18px; height: 244px; background: #cdcdcd; }
    .vs .fill { flex: 1; }
    .lower { height: 20px; display: flex; background: #fff; }
    .pages { width: 922px; border-right: 1px solid #8c8c8c; display: flex; align-items: stretch; background: #f3f3f3; flex: none; }
    .nav { width: 174px; border-top: 1px solid #8c8c8c; display: flex; align-items: center; padding-left: 4px; }
    .nav > * { flex: none; }
    .n1 { margin-left: 7px; } .n2 { margin-left: 8px; } .n3 { margin-left: 7.500px; }
    .num { margin-left: 8px; padding-top: 1px; } .of { margin-left: 8.500px; padding-top: 1px; }
    .ptab { width: 67px; display: grid; }
    .ptab > * { grid-area: 1/1; }
    .ptab span { text-align: center; padding: 3px 3px 0 0; font-size: 12.400px; }
    .rest { flex: 1; border-top: 1px solid #8c8c8c; display: flex; justify-content: flex-end; padding: 2px 2px 0 0; }
    .hsb { flex: 1; display: flex; padding-top: 1px; }
    .hsb .sb { width: 21px; height: 19px; padding: 0 1px 1px 0; }
    .hsb .thumb { margin-left: 315px; width: 536px; height: 18px; background: #cdcdcd; }
    .hsb .gapx { width: 6px; }
    .zi { width: 20px; display: flex; align-items: center; justify-content: center; }
    .pal { width: 25px; border-left: 1px solid #d2d2d2; display: flex; flex-direction: column; align-items: center; flex: none; }
    .grip { margin-top: 1px; }
    .tr { margin-top: 6px; } .ed { margin-top: 12px; } .ch { margin-top: 8px; }
    .sw { margin-top: 8px; width: 22px; height: 724px; overflow: hidden; border: 1px solid #555; border-bottom: 0; flex: none; }
    .s1 { height: 21px; border-bottom: 1px solid #555; display: block; }
    .end { display: flex; flex-direction: column; align-items: center; gap: 14px; margin-top: 5px; }
    .status { height: 41px; display: flex; align-items: center; padding-left: 7px; font-size: 12.600px; }
    .st1 { width: 132px; padding-top: 1px; } .st2 { flex: 1; }
    .noneb { margin-left: 3px; } .none { margin-left: 5px; width: 194px; font-size: 12.200px; }
    .vl { width: 1px; height: 28px; background: #d2d2d2; }
    .penI { margin-left: 12px; }
    .ink { width: 26px; height: 26px; background: #231815; border: 1px solid #999; margin-left: 1px; }
    .cm { margin-left: 4px; width: 214px; white-space: pre; }
  `];

  private c(n: string) { return html`<div class="c">${icon(n)}</div>`; }
  private on(n: string) { return html`<div class="c"><div class="on">${icon(n)}</div></div>`; }
  private dd(extra = "") { return html`<div class="dd ${extra}">${tri("d", 9, 5)}</div>`; }
  private tool(n: string, fly = false) {
    return html`<div class="tool"><div class="wrap">${icon(n)}${fly ? html`<svg class="ic fly" width="6" height="6"><path d="M6 0v6H0z"/></svg>` : nothing}</div></div>`;
  }
  private chev(dir: string, stroke = "#444", sw = 2) {
    const p: Record<string, string> = { u: "M1.500 6L5 2.500l3.500 3.500", d: "M1.500 3l3.500 3.500 3.500-3.500", l: "M6.500 1.500L3 5l3.500 3.500", r: "M3.500 1.500L7 5 3.500 8.500" };
    return html`<svg class="ic" width="10" height="10" viewBox="0 0 10 10"><path d=${p[dir]} fill="none" stroke=${stroke} stroke-width=${sw}/></svg>`;
  }
  private dbl() {
    return html`<svg class="ic" width="12" height="9"><path d="M1 0l4.500 4.500L1 9M6.500 0L11 4.500 6.500 9" fill="none" stroke="#aaa" stroke-width="1.500"/></svg>`;
  }
  private dual(a: string, b: string) {
    const s = html`${tri("d", 7, 4)}${tri("u", 7, 4)}`;
    return html`<div class="dual"><span class="v">${a}</span><span class="s">${s}</span><span class="v">${b}</span><span class="s">${s}</span></div>`;
  }
  private addPage() {
    return html`<svg class="ic" width="11" height="13"><path d="M3.500.6h6.900v11.800H.6V3.500zM3.500.6v3H.6M5.500 5v5M3 7.500h5" fill="none" stroke="#555" stroke-width="1.100"/></svg>`;
  }

  render() {
    return html`
      <div class="title">
        <svg class="ic" width="20" height="20"><path d="M0 0h20v20H0z" fill="#b5b5b5"/><path d="M1 3l4-2 12 12 2 6-6-2z" fill="#e6e6e6"/><path d="M2 4l13 13M5 2l12 13" stroke="#c6c6c6"/></svg>
        <span class="name">CorelDRAW X8 (64-Bit) - D:\\model\\Untitled-2.cdr</span>
        <div class="wc">
          <svg class="ic" width="16" height="16"><path d="M9 1.500H.6V15H15V9" fill="none" stroke="#b8b8b8" stroke-width="1.200"/><circle cx="7" cy="7" r="2.500" fill="#aaa"/><path d="M2 14q0-3 5-3.500T13 14zM6 8h2v3H6z" fill="#aaa"/><path d="M11 1.800a3 3 0 1 0 3.500 0M12.800 0v3.500" fill="none" stroke="#b8b8b8" stroke-width="1.100"/></svg>
          <svg class="ic" width="12" height="14"><path d="M0 9.500h12v3H0z" fill="#999"/></svg>
          <svg class="ic" width="14" height="14"><path d="M4 9H.6V.6h9V4M4 4.600h9.400v8.800H4z" fill="none" stroke="#999" stroke-width="1.300"/></svg>
          <svg class="ic x" width="14" height="14" viewBox="0 0 14 14"><path d="M1 1.500l12 11M13 1.500l-12 11" stroke="#999" stroke-width="2"/></svg>
        </div>
      </div>
      <div class="menu">${MENUS.map((m) => html`<span>${accel(m)}</span>`)}</div>
      <div class="bar std">
        ${this.c("newDoc")}${this.c("open")}${this.dd("first")}${this.c("save")}${this.c("print")}<div class="sep"></div>
        ${this.c("cut")}${this.c("copy")}${this.c("paste")}<div class="sep"></div>
        ${this.c("undo")}${this.dd()}${this.c("redo")}${this.dd()}<div class="sep"></div>
        ${this.c("content")}<div class="sep"></div>${this.c("importI")}${this.c("exportI")}${this.c("pdf")}<div class="sep"></div>
        <div class="box zoom"><span class="v">25%</span><span class="a">${tri("d", 10, 6)}</span></div>
        ${this.c("full")}<div class="sep"></div>${this.on("rulers")}${this.c("grid")}${this.on("guides")}<div class="sep"></div>
        <span class="snap">Snap <u>T</u>o</span>${this.dd("plain")}<span class="sp2"></span><div class="sep"></div>
        ${this.c("gear")}<div class="sep"></div>${this.c("launch")}<span class="launch">Launch</span>${this.dd("plain")}
      </div>
      <div class="bar prop">
        <div class="box grey wide"><span class="v">Custom</span><span class="a">${tri("d", 10, 6)}</span></div>
        <div class="pair size">
          <svg width="16" height="17"><path d="M1 1.500h14M3 0L1 1.500 3 3M13 0l2 1.500L13 3M.7 5.700h13.600v9.800H.7z" fill="none" stroke=${D} stroke-width="1.100"/></svg>
          <svg width="16" height="17"><path d="M1.500 1v14M0 3l1.500-2L3 3M0 13l1.500 2L3 13M5.500 1h9.300v14H5.500z" fill="none" stroke=${D} stroke-width="1.100"/></svg>
        </div>
        ${this.dual("50.0 cm", "100.0 cm")}<span class="sp2"></span><div class="sep"></div>
        ${this.on("portrait")}${this.c("landscape")}<div class="sep"></div>${this.on("pages")}${this.c("pageCur")}<div class="sep"></div>
        <span class="units">Units:</span>
        <div class="box grey" style="width:115px"><span class="v">centimeters</span><span class="a">${tri("d", 10, 6)}</span></div>
        <span class="sp1"></span><div class="sep"></div><span class="sp1"></span>${this.c("nudge")}
        <div class="box nud"><span class="v">0.01 cm</span><span class="a">${tri("u", 7, 4)}${tri("d", 7, 4)}</span></div>
        <span class="sp2"></span><div class="sep"></div>
        <div class="pair ppair">
          ${["X", "Y"].map((l) => html`<svg width="16" height="17"><path d="M.6 1h5.500v9H.6zM6 4h4.500v6M6 10v4h4" fill="none" stroke=${D} stroke-width="1.100"/><text x="9.500" y="16" font-size="8" font-family="Noto Sans">${l}</text></svg>`)}
        </div>${this.dual("0.5 cm", "0.5 cm")}<span class="sp2"></span><div class="sep"></div>
        ${this.on("treat")}<div class="sep"></div><span class="sp5"></span>${this.c("plusC")}
      </div>
      <div class="work">
        <div class="tools">
          <div class="tool"><div class="on">${icon("pick")}</div></div>
          ${this.tool("freePick")}${this.tool("shape")}<div class="hs"></div>
          ${this.tool("pen")}${this.tool("text")}${this.tool("line", true)}${this.tool("rect", true)}${this.tool("spiral")}${this.tool("artistic")}${this.tool("table")}<div class="hs"></div>
          ${this.tool("dim", true)}${this.tool("conn", true)}<div class="hs"></div>
          ${this.tool("knife", true)}${this.tool("eraser")}${this.tool("transform")}${this.tool("distort", true)}<div class="hs"></div>
          ${this.tool("dropper", true)}${this.tool("mesh")}${this.tool("fill")}${this.tool("smart")}<div class="hs"></div>
          ${this.tool("checker")}${this.tool("shadow", true)}<div class="hs"></div>
          <div class="tool plus">${icon("plusC")}</div>
          <div class="tool more">${this.dbl()}</div>
        </div>
        <div class="doc">
          <div class="tabs">
            <div class="tab home"><svg class="ic" width="16" height="16"><path d="M8 0l8 7.500h-2V16h-4v-5.500H6V16H2V7.500H0z" fill="#2b2b2b"/></svg>Welcome Screen</div>
            <div class="tab cur">Untitled-2.cdr</div>
            <div class="tab new"><svg class="ic" width="12" height="12"><path d="M6 0v12M0 6h12" stroke="#b0b0b0" stroke-width="2.500"/></svg></div>
          </div>
          <div class="hrow"><div class="corner"><svg class="ic" width="12" height="12"><path d="M0 2.500h11M2.500 0v12" stroke="#777" stroke-dasharray="1 1"/><path d="M4 4l6 6M4 7V4h3" fill="none" stroke="#666"/></svg></div><h-ruler></h-ruler></div>
          <div class="main">
            <v-ruler></v-ruler>
            <div class="stage">
              <div class="upper">
                <drawing-canvas></drawing-canvas>
                <div class="vs"><div class="sb">${this.chev("u")}</div><div class="thumb"></div><div class="fill"></div><div class="sb">${this.chev("d")}</div></div>
              </div>
              <div class="lower">
                <div class="pages">
                  <div class="nav">${this.addPage()}
                    <svg class="ic n1" width="13" height="12"><path d="M.7 0v12M13 0v12L2.500 6z" fill="#b0b0b0" stroke="#b0b0b0" stroke-width="1"/></svg>
                    <svg class="ic n2" width="10" height="12"><path d="M10 0v12L0 6z" fill="#b0b0b0"/></svg>
                    <span class="num">1</span><span class="of">of</span><span class="num">1</span>
                    <svg class="ic n3" width="10" height="12"><path d="M0 0v12l10-6z" fill="#b0b0b0"/></svg>
                    <svg class="ic n2" width="13" height="12"><path d="M12.300 0v12M0 0v12l10.500-6z" fill="#b0b0b0" stroke="#b0b0b0" stroke-width="1"/></svg>
                    <span class="n1">${this.addPage()}</span></div>
                  <div class="ptab"><svg class="ic" width="67" height="20"><path d="M0 0L6.500 19H60.500L67 0z" fill="#fff"/><path d="M0 .5L6.500 19H60.500L67 .5" fill="none" stroke="#8c8c8c"/></svg><span>Page 1</span></div>
                  <div class="rest"><svg class="ic" width="8" height="15"><path d="M.5 0v15M4.500 0v15" stroke="#999" stroke-dasharray="1 2"/><path d="M2.500 1.500v13M6.500 1.500v13" stroke="#999" stroke-dasharray="1 2"/></svg></div>
                </div>
                <div class="hsb"><div class="sb">${this.chev("l")}</div><div class="thumb"></div><div class="gapx"></div><div class="sb">${this.chev("r")}</div>
                  <div class="zi"><svg class="ic" width="14" height="14"><circle cx="6" cy="6" r="5.300" fill="none" stroke=${D} stroke-width="1.200"/><path d="M6 2.500v2M6 7.500v2M2.500 6h2M7.500 6h2" stroke=${D} stroke-width="1.500"/><path d="M9.700 9.700L13.500 13.500" stroke=${D} stroke-width="2.200"/></svg></div></div>
              </div>
            </div>
          </div>
        </div>
        <div class="pal">
          <svg class="ic grip" width="20" height="6"><path d="M0 1.500h20M0 5.500h20" stroke="#aaa" stroke-dasharray="1 3"/><path d="M2 3.500h18" stroke="#aaa" stroke-dasharray="1 3"/></svg>
          <span class="tr">${tri("r", 5, 9)}</span>
          <span class="ed">${icon("dropperG", 17)}</span>
          <span class="ch"><svg class="ic" width="11" height="8"><path d="M1 7l4.500-5L10 7" fill="none" stroke="#ccc" stroke-width="2"/></svg></span>
          <div class="sw">${PALETTE.map((p) => p === "none"
            ? html`<svg class="s1" width="20" height="21"><path d="M0 0h20v21H0z" fill="#fff"/><path d="M1 1l18 18M19 1L1 19" stroke="#333"/></svg>`
            : html`<div class="s1" style="background:${p}"></div>`)}</div>
          <div class="end"><svg class="ic" width="11" height="8"><path d="M1 1l4.500 5L10 1" fill="none" stroke="#aaa" stroke-width="2"/></svg>${this.dbl()}</div>
        </div>
      </div>
      <div class="status">
        <span class="st1">( 161.691, 46.666 )</span><span class="st2">${tri("r", 5, 10)}</span>
        <svg class="ic" width="21" height="20"><path d="M.8.800h18.400v14H.8z" fill="#2aa5e8" stroke="#222" stroke-width="1.500"/><path d="M2 2h16v5.500H2z" fill="#e8101c"/><circle cx="10" cy="8" r="2.800" fill="#fff" stroke="#333"/><circle cx="10" cy="8" r="1" fill="#e8101c"/><path d="M4 8h2M14 8h2" stroke="#fff"/><path d="M7 16h6v1.500H7zM3 18h14v1.500H3z" fill="#222"/></svg>
        <span class="sp17"></span>${icon("fill")}
        <svg class="ic noneb" width="26" height="26"><path d="M.5.500h25v25H.5z" fill="#fff" stroke="#888"/><path d="M2 2l22 22M24 2L2 24" stroke="#333" stroke-width="1.300"/></svg>
        <span class="none">None</span><div class="vl"></div>
        <span class="penI">${icon("pen")}</span><div class="ink"></div><span class="cm">C:0 M:0 Y:0 K:100  0.500 pt</span>
      </div>
      <win-taskbar></win-taskbar>`;
  }
}
